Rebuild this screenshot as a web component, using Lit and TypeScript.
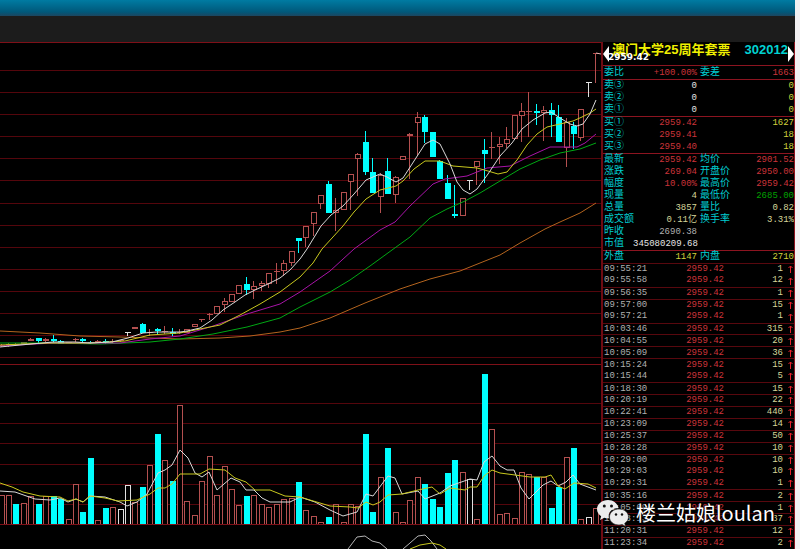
import { LitElement, html, svg, css, nothing } from "lit";
import { customElement } from "lit/decorators.js";

type Tone = "r" | "c" | "w";
// body top, body bottom, high, low, colour, top of the volume bar, colour of the volume bar
type Candle = [number, number, number, number, Tone, number, Tone];

const CANDLES: Candle[] = [
  [345, 346, 344, 347, "r", 495, "r"],
  [344, 345, 343, 347, "r", 495, "r"],
  [344, 345, 343, 346, "r", 504, "c"],
  [342, 344, 342, 344, "r", 503, "r"],
  [339, 341, 338, 341, "r", 496, "r"],
  [338, 341, 338, 343, "c", 504, "c"],
  [339, 341, 338, 342, "r", 496, "r"],
  [339, 341, 335, 343, "c", 496, "c"],
  [341, 344, 340, 344, "c", 499, "c"],
  [342, 344, 342, 344, "r", 519, "r"],
  [339, 340, 338, 342, "r", 484, "r"],
  [339, 341, 338, 343, "c", 512, "c"],
  [342, 343, 341, 344, "c", 458, "c"],
  [341, 342, 340, 343, "r", 520, "r"],
  [341, 342, 339, 344, "c", 508, "c"],
  [341, 342, 339, 343, "r", 507, "r"],
  [340, 341, 340, 342, "r", 509, "w"],
  [332, 333, 332, 336, "w", 485, "w"],
  [327, 329, 327, 329, "r", 502, "r"],
  [324, 333, 323, 333, "c", 487, "c"],
  [332, 333, 329, 336, "r", 465, "r"],
  [329, 331, 328, 335, "c", 434, "c"],
  [331, 332, 326, 334, "r", 460, "r"],
  [332, 334, 328, 336, "c", 481, "c"],
  [332, 333, 329, 334, "r", 405, "r"],
  [329, 333, 329, 333, "r", 501, "r"],
  [324, 327, 324, 327, "r", 515, "r"],
  [319, 320, 319, 322, "r", 481, "r"],
  [314, 315, 313, 320, "r", 456, "r"],
  [306, 314, 306, 314, "r", 495, "r"],
  [301, 305, 298, 312, "r", 466, "r"],
  [294, 302, 294, 302, "r", 489, "r"],
  [285, 294, 285, 294, "r", 505, "r"],
  [284, 290, 277, 295, "c", 496, "c"],
  [286, 290, 281, 299, "r", 495, "r"],
  [283, 286, 281, 291, "r", 504, "r"],
  [273, 284, 273, 288, "r", 507, "r"],
  [271, 272, 263, 284, "r", 504, "r"],
  [263, 271, 260, 276, "r", 499, "r"],
  [251, 263, 251, 266, "r", 498, "r"],
  [238, 241, 238, 253, "c", 482, "c"],
  [226, 238, 226, 247, "r", 510, "r"],
  [212, 224, 212, 236, "r", 516, "r"],
  [195, 204, 195, 209, "r", 522, "r"],
  [184, 213, 181, 213, "c", 517, "c"],
  [210, 213, 198, 231, "r", 504, "r"],
  [192, 210, 192, 210, "r", 522, "r"],
  [174, 182, 174, 210, "r", 504, "r"],
  [154, 159, 153, 196, "r", 506, "r"],
  [142, 172, 131, 175, "c", 434, "c"],
  [172, 193, 158, 193, "c", 512, "c"],
  [175, 197, 173, 213, "r", 477, "r"],
  [171, 194, 158, 194, "c", 448, "c"],
  [177, 195, 176, 203, "r", 512, "r"],
  [156, 160, 156, 160, "r", 522, "r"],
  [134, 136, 133, 179, "r", 500, "r"],
  [117, 123, 112, 155, "r", 477, "r"],
  [117, 132, 115, 143, "c", 484, "c"],
  [132, 157, 132, 157, "c", 499, "c"],
  [161, 179, 160, 179, "c", 507, "c"],
  [183, 199, 175, 199, "c", 473, "c"],
  [214, 216, 185, 218, "c", 460, "c"],
  [198, 216, 198, 216, "r", 472, "r"],
  [180, 181, 180, 190, "w", 479, "w"],
  [161, 167, 161, 185, "r", 519, "r"],
  [150, 154, 139, 183, "c", 374, "c"],
  [147, 148, 132, 159, "r", 429, "r"],
  [144, 147, 137, 164, "r", 514, "r"],
  [139, 144, 127, 148, "r", 513, "r"],
  [115, 139, 115, 139, "r", 518, "r"],
  [111, 116, 103, 142, "r", 472, "r"],
  [111, 112, 92, 137, "r", 474, "r"],
  [111, 113, 104, 125, "c", 477, "c"],
  [110, 113, 106, 141, "r", 477, "r"],
  [110, 115, 103, 137, "c", 508, "c"],
  [117, 142, 105, 142, "c", 487, "c"],
  [122, 148, 118, 167, "r", 457, "r"],
  [126, 134, 122, 149, "c", 448, "c"],
  [109, 138, 109, 141, "r", 519, "r"],
  [82, 83, 82, 97, "w", 517, "w"],
  [53, 54, 53, 83, "r", 508, "r"],
];

const PRICE_GRID = [70, 92, 114, 136, 158, 180, 203, 225, 247, 269, 291, 313, 335, 357];
const VOLUME_GRID = [403, 423, 443, 464, 484, 504];
const BASELINE = 524;

const CURVES: [string, string][] = [
  ["#b4641e", "0,331 40,333 80,336 120,337 150,338 180,339 220,338 250,336 280,332 300,328 330,318 365,303 400,289 430,279 460,271 500,255 520,243 545,229 560,222 580,213 596,203"],
  ["#00a814", "0,343 50,343 100,344 150,342 180,339 213,334 247,327 280,318 300,307 330,292 350,280 370,266 392,250 410,237 430,218 447,209 465,201 480,193 500,181 520,169 540,160 560,153 580,149 596,143"],
  ["#a814a8", "0,346 53,343 120,343 150,339 180,336 213,326 247,314 280,304 300,292 330,271 354,249 380,230 395,222 410,206 433,184 445,179 467,176 487,168 510,166 530,156 550,147 577,147 585,143 596,134"],
  ["#c8c81e", "0,345 50,343 90,343 125,341 150,335 180,333 200,329 220,325 240,315 260,304 280,292 300,277 313,263 322,249 343,226 354,212 366,199 380,190 396,186 403,181 414,169 425,161 440,161 453,166 477,168 488,171 498,174 507,172 517,160 527,145 537,134 547,127 560,124 573,121 582,117 590,113 596,109"],
  ["#d8d8d8", "0,347 20,345 53,342 75,342 90,343 112,342 128,338 143,333 157,332 180,332 187,331 200,328 212,320 223,310 235,302 245,295 255,290 268,284 280,278 290,270 300,259 307,249 321,226 331,215 343,206 354,194 366,180 380,174 387,177 396,182 403,178 414,161 425,144 433,140 440,144 450,164 457,182 463,190 470,194 477,189 488,174 500,156 512,143 522,129 533,120 545,113 551,112 560,118 570,124 577,126 583,124 590,114 596,100"],
  ["#d8d8d8", "0,491 15,492 35,499 50,500 60,498 68,502 76,499 83,502 90,496 105,497 120,502 127,506 137,502 147,494 158,473 165,470 172,465 180,450 188,458 195,473 202,477 209,472 217,490 231,478 240,482 246,490 254,490 262,498 270,502 290,502 300,497 315,502 330,510 343,516 357,512 366,494 373,496 388,476 395,478 402,494 418,491 425,499 440,493 450,486 470,479 477,480 484,462 492,456 500,466 507,470 514,470 521,488 529,499 543,485 551,481 558,486 566,482 573,475 580,484 596,490"],
  ["#c8c81e", "0,483 12,487 23,492 40,496 60,497 68,501 76,499 83,502 90,496 105,498 118,501 137,500 150,494 158,488 165,488 172,484 180,474 200,474 209,469 225,470 235,478 246,482 255,490 270,490 285,496 300,497 330,506 350,507 358,508 366,502 373,505 380,502 388,495 402,494 418,490 432,487 440,494 450,488 465,490 470,487 477,487 484,476 492,470 500,473 515,475 530,477 545,477 551,475 558,486 565,489 574,483 588,484 596,488"],
  ["#b4b4b4", "348,549 357,537 365,536 372,541 380,543 387,549"],
  ["#b4b4b4", "403,549 410,543 418,536 425,535 431,541 437,549"],
  ["#c8c81e", "410,549 420,545 432,543 440,545 446,549"],
  ["#e0b0b0", "596,53 601,54"],
];

@customElement("kline-chart")
class KlineChart extends LitElement {
  static styles = css`
    :host { display: block; min-width: 0; }
    svg { display: block; width: 100%; height: 100%; }
    .grid { stroke: #54060c; stroke-width: 1; }
    .frame { stroke: #7e1018; stroke-width: 1; }
    .crisp { shape-rendering: crispEdges; }
    .curve { fill: none; stroke-width: 1; }
    .r { fill: #000; stroke: #b45050; }
    .c { fill: #00ffff; stroke: #00ffff; }
    .w { fill: #000; stroke: #e0e0e0; }
  `;

  private line(y: number, name: string) {
    return svg`<line class=${name} x1="0" x2="601" y1=${y + 0.5} y2=${y + 0.5}></line>`;
  }

  private candle([top, bottom, high, low, tone]: Candle, i: number) {
    const x = Math.floor(1.1 + 7.434 * i) + 0.5;
    const flat = bottom - top <= 1;
    return svg`<g class=${tone}>
      <line x1=${x} x2=${x} y1=${high} y2=${low}></line>
      ${flat
        ? svg`<line x1=${x - 2.5} x2=${x + 3.5} y1=${top + 0.5} y2=${top + 0.5}></line>`
        : svg`<rect x=${x - 2} y=${top + 0.5} width="5" height=${bottom - top - 1}></rect>`}
    </g>`;
  }

  private volume(c: Candle, i: number) {
    const x = Math.floor(1.1 + 7.434 * i) + 0.5;
    const top = c[5] + 0.5;
    return svg`<rect class=${c[6]} x=${x - 2} y=${top} width="5" height=${BASELINE - top}></rect>`;
  }

  render() {
    return html`<svg viewBox="0 42 601 507" preserveAspectRatio="none" role="img" aria-label="K线图">
      <g class="crisp">
        ${PRICE_GRID.map((y) => this.line(y, "grid"))}
        ${VOLUME_GRID.map((y) => this.line(y, "grid"))}
        ${CANDLES.map((c, i) => this.candle(c, i))}
        ${CANDLES.map((c, i) => this.volume(c, i))}
        ${[42, 364, BASELINE].map((y) => this.line(y, "frame"))}
      </g>
      ${CURVES.map(([color, points]) => svg`<polyline class="curve" stroke=${color} points=${points}></polyline>`)}
    </svg>`;
  }
}

// label, value, colour, second label, second value, second colour
type Quote = [string, string, string, string, string, string];

const QUOTES: Quote[][] = [
  [["委比", "+100.00%", "red", "委差", "1663", "red"]],
  [
    ["卖③", "0", "white", "", "0", "yellow"],
    ["卖②", "0", "white", "", "0", "yellow"],
    ["卖①", "0", "white", "", "0", "yellow"],
  ],
  [
    ["买①", "2959.42", "red", "", "1627", "yellow"],
    ["买②", "2959.41", "red", "", "18", "yellow"],
    ["买③", "2959.40", "red", "", "18", "yellow"],
  ],
  [
    ["最新", "2959.42", "red", "均价", "2901.52", "red"],
    ["涨跌", "269.04", "red", "开盘价", "2950.00", "red"],
    ["幅度", "10.00%", "red", "最高价", "2959.42", "red"],
    ["现量", "4", "pale", "最低价", "2685.00", "green"],
    ["总量", "3857", "pale", "量比", "0.82", "pale"],
    ["成交额", "0.11亿", "pale", "换手率", "3.31%", "pale"],
    ["昨收", "2690.38", "gray", "", "", ""],
    ["市值", "345080209.68", "white", "", "", ""],
  ],
  [["外盘", "1147", "yellow", "内盘", "2710", "yellow"]],
];

const TICKS: [string, number][] = [
  ["09:55:21", 1], ["09:55:58", 12], ["09:56:35", 1], ["09:57:00", 15],
  ["09:57:21", 1], ["10:03:46", 315], ["10:04:55", 20], ["10:05:09", 36],
  ["10:15:24", 15], ["10:15:44", 5], ["10:18:30", 15], ["10:20:19", 22],
  ["10:22:41", 440], ["10:23:09", 14], ["10:25:37", 50], ["10:28:28", 10],
  ["10:29:00", 10], ["10:29:03", 10], ["10:29:31", 1], ["10:35:16", 2],
  ["11:05:09", 1], ["11:18:13", 37], ["11:20:31", 12], ["11:23:34", 2],
];

@customElement("quote-panel")
class QuotePanel extends LitElement {
  static styles = css`
    :host {
      display: flex; flex-direction: column; box-sizing: border-box;
      border-left: 2px solid #6e0a12; border-right: 1px solid #8c1420;
      font: 9px/12px "Liberation Mono", "Noto Sans CJK SC", monospace;
      color: #a8a8a8; overflow: hidden;
    }
    .head { position: relative; display: flex; align-items: center; height: 16px; padding-bottom: 7px; }
    .title {
      flex: 1; margin: 0 0 0 9px; white-space: nowrap; color: #f0f000;
      font: bold 13px/16px "Liberation Sans", "Noto Sans CJK SC", sans-serif;
    }
    .code { color: #00d2d2; font: bold 13px/16px "Liberation Sans", sans-serif; }
    .step { display: block; border: 0; padding: 0; background: none; width: 6px; height: 16px; margin-top: 8px; }
    .step.prev { position: absolute; left: 0; top: 4px; margin: 0; }
    .step svg { display: block; fill: #fff; }
    .mark {
      position: absolute; left: 5px; top: 9px; color: #fff;
      font: bold 9px/12px "DejaVu Sans", sans-serif;
    }
    table { width: 100%; table-layout: fixed; border-spacing: 0; }
    td, th { padding: 0; height: 12px; text-align: right; white-space: nowrap; font-weight: normal; }
    th { text-align: left; color: #00ccd0; font-size: 10px; padding-left: 1px; }
    .first > * { border-top: 1px solid #8c1420; }
    .tall > * { height: 13px; }
    .label { width: 30px; }
    .value { width: 64px; }
    .label2 { width: 34px; }
    .quotes th + td + th { padding-left: 3px; }
    .red { color: #cc343a; }
    .green { color: #00a000; }
    .yellow { color: #d2d23c; }
    .pale { color: #d6d69a; }
    .white { color: #e6e6e6; }
    .gray { color: #b0b0b0; }
    .ticks { flex: 1; }
    .ticks td { height: 11px; line-height: 11px; }
    .ticks .time { width: 45px; text-align: left; padding-left: 1px; color: #b0b0b0; }
    .ticks .price { width: 75px; }
    .ticks .up { width: 11px; }
    .ticks .minute > td { border-top: 1px solid #58080e; line-height: 10px; height: 10px; }
    .up svg { display: block; margin: 0 1px 0 auto; }
  `;

  render() {
    return html`
      <div class="head">
        <button class="step prev" aria-label="上一个">
          <svg width="6" height="16" viewBox="0 0 6 16"><path d="M6 0V16L0 8Z"></path></svg>
        </button>
        <h1 class="title">澳门大学25周年套票</h1>
        <span class="code">302012</span>
        <button class="step" aria-label="下一个">
          <svg width="6" height="16" viewBox="0 0 6 16"><path d="M0 0V16L6 8Z"></path></svg>
        </button>
        <span class="mark">2959.42</span>
      </div>
      <table class="quotes">
        <colgroup><col class="label" /><col class="value" /><col class="label2" /><col /></colgroup>
        ${QUOTES.map((group, g) => html`<tbody>
          ${group.map((q, i) => html`<tr class="${i === 0 ? "first" : ""} ${g === 0 ? "tall" : ""}">
            <th scope="row">${q[0]}</th><td class=${q[2]}>${q[1]}</td>
            <th scope="row">${q[3] || nothing}</th><td class=${q[5]}>${q[4]}</td>
          </tr>`)}
        </tbody>`)}
      </table>
      <table class="ticks">
        <tbody>
          ${TICKS.map(([time, count], i) => {
            const newMinute = i === 0 || TICKS[i - 1][0].slice(0, 5) !== time.slice(0, 5);
            return html`<tr class=${newMinute ? "minute" : ""}>
              <td class="time">${time}</td>
              <td class="price red">2959.42</td>
              <td class="pale">${count}</td>
              <td class="up"><svg width="5" height="8" viewBox="0 0 5 8" aria-label="上涨">
                <path d="M2.5 8V1M0.5 3L2.5 1L4.5 3" fill="none" stroke="#e6202c"></path>
              </svg></td>
            </tr>`;
          })}
        </tbody>
      </table>`;
  }
}

@customElement("app-root")
class AppRoot extends LitElement {
  static styles = css`
    :host { display: flex; min-height: 100vh; background: #f2f0f2; position: relative; }
    .window { flex: 1; display: flex; flex-direction: column; min-width: 0; margin-right: 5px; background: #000; }
    .titlebar { height: 16px; background: linear-gradient(#007ba2, #00587a 75%, #1c4660); }
    .toolbar { height: 26px; background: #1c1c1c; }
    .main { flex: 1; display: grid; grid-template-columns: minmax(0, 1fr) 194px; }
    .watermark {
      position: absolute; right: 25px; bottom: 21px; display: flex; align-items: center; gap: 7px;
      color: #fff; font: 20px/30px "Noto Sans CJK SC", sans-serif;
      text-shadow: 1px 1px 2px #000, 0 0 2px #000;
    }
    .watermark svg { display: block; }
  `;

  render() {
    return html`
      <div class="window">
        <header class="titlebar"></header>
        <div class="toolbar"></div>
        <main class="main">
          <kline-chart></kline-chart>
          <quote-panel></quote-panel>
        </main>
      </div>
      <div class="watermark">
        <svg width="32" height="28" viewBox="0 0 32 28" aria-hidden="true">
          <path fill="#ececec" d="M11 1C5 1 0 5 0 10c0 3 1.500 5.500 4.200 7.200L3 21l4.300-2.300c1.300.400 2.500.500 3.900.500h.800C10.500 13.500 15 9 21.600 9 20.500 4.400 16.200 1 11 1z"></path>
          <path fill="#ececec" stroke="#222" stroke-width=".6" d="M22 10c-5.300 0-9.500 3.500-9.500 8s4.200 8 9.500 8c1.100 0 2.200-.200 3.200-.500l3.400 1.900-.900-3.100C30 22.800 31.500 20.600 31.500 18c0-4.500-4.300-8-9.500-8z"></path>
          <g fill="#111"><circle cx="7.300" cy="7" r="1.500"></circle><circle cx="14.500" cy="7" r="1.500"></circle>
          <circle cx="19" cy="15.500" r="1.200"></circle><circle cx="25" cy="15.500" r="1.200"></circle></g>
        </svg>
        <span>楼兰姑娘loulan</span>
      </div>`;
  }
}
